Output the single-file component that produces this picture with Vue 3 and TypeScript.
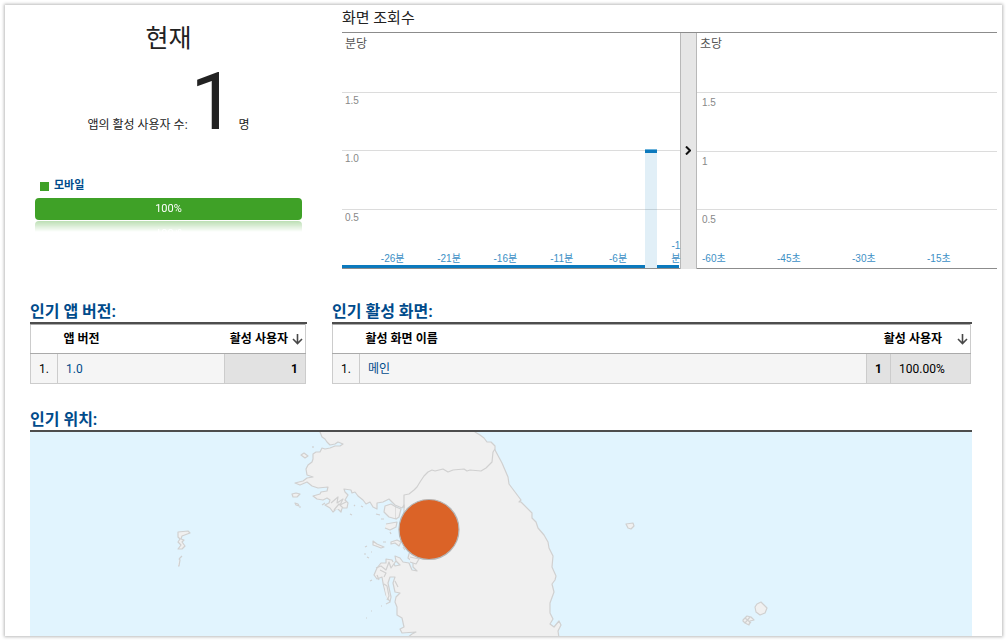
<script setup lang="ts">
interface Tick { label: string; column: number }

const minutes: number[] = Array.from({ length: 30 }, (_, i) => (i === 27 ? 1 : 0))
const axisMax = 2
const minuteTicks: Tick[] = [26, 21, 16, 11, 6, 1].map((m) => ({ label: `-${m}분`, column: 30 - m }))
const secondTicks: string[] = ['-60초', '-45초', '-30초', '-15초']
const minuteScale: string[] = ['', '1.5', '1.0', '0.5']
const secondScale: string[] = ['', '1.5', '1', '0.5']

const mainland =
  'M320 432L322 437L325 439L327 442L330 445L335 444L338 442L343 444L340 446L335 446L330 448L325 449L322 448L320 452L316 452L313 454L313 459L312 462L308 465L306 469L307 475L313 477L307 478L303 481L295 483L300 485L307 482L312 486L318 488L328 487L327 491L321 492L320 494L313 496L317 499L323 500L327 498L330 500L329 503L325 505L330 508L333 512L337 508L341 512L342 508L347 508L348 503L345 500L348 495L345 492L344 489L351 490L352 493L355 492L358 496L363 500L366 504L370 502L373 507L377 509L377 503L383 502L389 499L395 505L402 508L404 505L404 520L415 540L409 554L408 558L413 562L413 567L417 571L412 570L409 563L403 562L400 558L395 556L396 561L400 565L395 566L392 560L386 559L386 563L381 563L377 568L374 575L377 579L382 577L383 583L386 595L390 602L391 597L388 583L390 577L395 577L393 583L395 592L400 593L396 597L395 602L397 607L397 615L402 618L404 627L400 629L402 633L416 632L412 634L407 638L559 638L558 631L561 625L559 621L554 627L550 624L553 619L550 613L550 603L554 592L552 584L555 580L556 576L552 567L553 556L549 548L548 542L544 535L538 528L536 522L532 518L532 513L521 502L519 502L521 500L509 484L508 477L502 463L495 450L495 446L491 442L487 442L484 438L480 435L475 432V430H320Z'
const border =
  'M404 508V495L409 494L414 490L417 487L420 482L424 476L428 472L432 470L435 471L443 469L448 472L453 470L464 469L467 471L470 470L481 471L486 468L492 462L493 452L495 449'
const islands: string[] = [
  'M301 455L304 453L308 456L305 458Z',
  'M292 494L296 493L300 494L297 497L293 497Z',
  'M295 503L298 504L299 506L296 505Z',
  'M299 507L301 507M313 448V446M322 505L325 503M331 503L338 497L337 503L343 499L340 505L346 502M334 510L339 504L343 508',
  'M385 506L391 504L396 507L396 519L389 517L384 512Z',
  'M396 507L401 509L399 517L396 519M376 514L380 515M381 519L384 519M350 514L352 515M354 505L355 506M361 506L363 507',
  'M386 524L397 522L396 527L390 530L385 528M390 532L391 534',
  'M373 541L377 544L384 547L381 548L376 546L373 545Z',
  'M391 542L397 540L401 542L399 546L395 543L391 544Z',
  'M383 542L386 542M365 547L367 546M364 554L366 554M367 557L369 558M371 552L372 552M403 547L405 550',
  'M376 568L381 566L386 570L389 562L391 568L396 561M380 570L386 573L384 577M377 575L379 580M410 557L419 559L416 564L410 562',
  'M384 584L387 586L389 596L387 600M370 581L372 580M381 606H382M371 611H372M366 618H367M386 604L390 602M395 581L398 587',
  'M178 532L188 531L190 533L182 536L181 539L184 540L182 542L185 546L182 549H178L181 545L178 542L180 539L178 537Z',
  'M179 559L182 556M179 559L180 560L179 566H178',
  'M626 524L633 523L634 526L631 529L628 528Z',
  'M761 602L764 605L767 608L765 613L760 615L756 612L755 607L757 604Z',
  'M743 620L747 616L751 617L754 620L750 621L749 625L745 623L743 621ZM745 618L751 623M750 617L745 623',
]
</script>

<template>
  <main class="panel">
    <section class="top">
      <div class="summary">
        <h1>현재</h1>
        <p class="active"><span>앱의 활성 사용자 수:</span><strong>1</strong><span>명</span></p>
        <p class="legend"><i></i>모바일</p>
        <div class="share">100%</div>
      </div>
      <div class="views">
        <h2>화면 조회수</h2>
        <div class="charts">
          <div class="chart minute">
            <div class="rows">
              <div v-for="(s, i) in minuteScale" :key="i" class="row">
                <span v-if="s">{{ s }}</span><b v-else>분당</b>
              </div>
            </div>
            <div class="bars">
              <i v-for="(v, i) in minutes" :key="i" :class="{ filled: v > 0 }" :style="{ height: (v / axisMax) * 100 + '%' }"></i>
            </div>
            <div class="ticks">
              <span v-for="t in minuteTicks" :key="t.label" :class="{ last: t.column === 29 }" :style="{ left: ((t.column + 0.5) / 30) * 100 + '%' }">{{ t.label }}</span>
            </div>
          </div>
          <button class="toggle" type="button" aria-label="초당 차트 접기">
            <svg width="6" height="9" viewBox="0 0 6 9"><path d="M1 0.5L5 4.5L1 8.5" fill="none" stroke="#111" stroke-width="2" /></svg>
          </button>
          <div class="chart second">
            <div class="rows">
              <div v-for="(s, i) in secondScale" :key="i" class="row">
                <span v-if="s">{{ s }}</span><b v-else>초당</b>
              </div>
            </div>
            <div class="quarters"><span v-for="t in secondTicks" :key="t">{{ t }}</span></div>
          </div>
        </div>
      </div>
    </section>

    <section class="tables">
      <div class="card">
        <h3>인기 앱 버전:</h3>
        <table>
          <colgroup><col class="c-index" /><col /><col class="c-users" /></colgroup>
          <thead>
            <tr>
              <th></th>
              <th>앱 버전</th>
              <th class="sorted">
                <div class="sort">활성 사용자<svg width="11" height="12" viewBox="0 0 11 12"><path d="M5.5 1V10.5M1 6L5.5 10.5L10 6" fill="none" stroke="#484848" stroke-width="1.6" /></svg></div>
              </th>
            </tr>
          </thead>
          <tbody>
            <tr><td class="index">1.</td><td><a href="#">1.0</a></td><td class="count">1</td></tr>
          </tbody>
        </table>
      </div>
      <div class="card">
        <h3>인기 활성 화면:</h3>
        <table>
          <colgroup><col class="c-index" /><col /><col class="c-num" /><col class="c-pct" /></colgroup>
          <thead>
            <tr>
              <th></th>
              <th>활성 화면 이름</th>
              <th class="sorted" colspan="2">
                <div class="sort wide">활성 사용자<svg width="11" height="12" viewBox="0 0 11 12"><path d="M5.5 1V10.5M1 6L5.5 10.5L10 6" fill="none" stroke="#484848" stroke-width="1.6" /></svg></div>
              </th>
            </tr>
          </thead>
          <tbody>
            <tr><td class="index">1.</td><td><a href="#">메인</a></td><td class="num">1</td><td class="pct">100.00%</td></tr>
          </tbody>
        </table>
      </div>
    </section>

    <section class="place">
      <h3>인기 위치:</h3>
      <svg class="map" viewBox="30 432 942 204" preserveAspectRatio="xMidYMin slice" role="img" aria-label="인기 위치">
        <g fill="#f0f0f0" stroke="#d0d0d0" stroke-width="1.2" stroke-linejoin="round">
          <path :d="mainland" />
          <path v-for="(d, i) in islands" :key="i" :d="d" />
          <path :d="border" fill="none" />
        </g>
        <circle cx="429" cy="529.5" r="30" fill="#db6327" stroke="#b5b5b5" stroke-width="1.2" />
      </svg>
    </section>
  </main>
</template>

<style>
body { margin: 0; background: #fff; }
</style>

<style scoped>
* { box-sizing: border-box; }
h1, h2, h3, p { margin: 0; font-weight: 400; }
.panel {
  margin: 5px;
  background: #fff;
  box-shadow: 0 0 3px 1px #bbb;
  color: #222;
  font: 12px/18px Roboto, "Noto Sans CJK KR", sans-serif;
}
.top { display: flex; }
.summary { flex: 0 0 337px; padding: 15px 40px 0 30px; }
h1 { font-size: 25px; line-height: 38px; text-align: center; }
.active { display: flex; justify-content: center; align-items: baseline; gap: 3px; height: 80px; margin-top: 4px; line-height: 80px; }
.active strong { font-size: 80px; font-weight: 400; }
.legend { display: flex; align-items: center; gap: 5px; margin-top: 35px; padding-left: 5px; color: #004b8b; font-size: 11px; font-weight: 700; }
.legend i { width: 9px; height: 9px; background: #3fa127; }
.share {
  margin-top: 3px;
  height: 22px;
  border-radius: 4px;
  background: #3fa127;
  color: #fff;
  font-size: 11px;
  line-height: 22px;
  text-align: center;
  -webkit-box-reflect: below 1px linear-gradient(transparent 50%, rgba(0, 0, 0, 0.35));
}
.views { flex: 1; min-width: 0; padding-right: 5px; }
h2 { padding-top: 2px; height: 27px; font-size: 15px; line-height: 22px; }
.charts { display: flex; border-top: 1px solid #8c8c8c; }
.chart { position: relative; min-width: 0; }
.minute { flex: 338; }
.second { flex: 300; }
.rows { display: grid; grid-template-rows: 60px 58px 59px 59px; }
.second .rows { grid-template-rows: 60px 59px 58px 59px; }
.row { border-bottom: 1px solid #dcdcdc; }
.row:last-child { border-color: #8c8c8c; }
.row span { display: block; padding: 2px 0 0 3px; color: #888; font: 10px/12px "Liberation Sans", sans-serif; }
.second .row span { padding: 4px 0 0 5px; }
.row b { display: block; padding: 2px 0 0 3px; color: #555; font-weight: 400; }
.bars { position: absolute; inset: -2px 1px 1px 0; display: flex; align-items: flex-end; }
.bars i { flex: 1; min-height: 3px; background: #0b79bd; }
.bars .filled { border-top: 3px solid #0b79bd; background: rgba(11, 121, 189, 0.12); background-clip: padding-box; box-shadow: 0 -1px #6db3db; }
.ticks { position: absolute; inset: auto 0 4px 0; height: 13px; }
.ticks span, .quarters span { color: #3c8fc5; font: 10px/13px "Liberation Sans", "Noto Sans CJK KR", sans-serif; }
.ticks span { position: absolute; bottom: 0; transform: translateX(-50%); white-space: nowrap; }
.ticks .last { width: 12px; text-align: right; white-space: normal; word-break: break-all; }
.quarters { position: absolute; inset: auto 0 4px 0; display: grid; grid-template-columns: repeat(4, 1fr); padding-left: 5px; margin-right: -5px; }
.toggle { display: flex; align-items: center; justify-content: center; width: 17px; padding: 0 1px 2px 0; border: solid #b8b8b8; border-width: 0 1px; background: #e6e6e6; }
.tables { display: grid; grid-template-columns: 277fr 640fr; gap: 25px; padding: 31px 30px 0 25px; }
h3 { padding-top: 2px; height: 24px; border-bottom: 2px solid #4d4d4d; color: #004b8b; font-size: 16px; font-weight: 700; line-height: 20px; }
table { width: calc(100% - 1px); border-collapse: collapse; table-layout: fixed; border: 1px solid #ccc; border-top-color: #aaa; color: #000; }
.c-index { width: 27px; }
.c-users { width: 81px; }
.c-num { width: 24px; }
.c-pct { width: 80px; }
th, td { height: 30px; padding: 0 0 0 7px; text-align: left; }
th { height: 29px; padding-left: 6px; border-bottom: 1px solid #aaa; font-weight: 700; }
th.sorted { padding: 0; }
.sort { display: flex; justify-content: flex-end; align-items: center; gap: 4px; padding-right: 2px; white-space: nowrap; }
.sort.wide { gap: 15px; }
td { border: 1px solid #ccc; border-top-color: #aaa; background: #f5f5f5; padding-left: 8px; }
td.index { padding: 0; text-align: center; }
td.count, td.num, td.pct { background: #e2e2e2; }
td.count { padding-right: 7px; text-align: right; font-weight: 700; }
td.num { padding: 0; text-align: center; font-weight: 700; }
a { color: #004b8b; text-decoration: none; }
.place { padding: 24px 30px 0 25px; }
.map { display: block; width: 100%; height: 204px; background: #e1f4fe; }
</style>
